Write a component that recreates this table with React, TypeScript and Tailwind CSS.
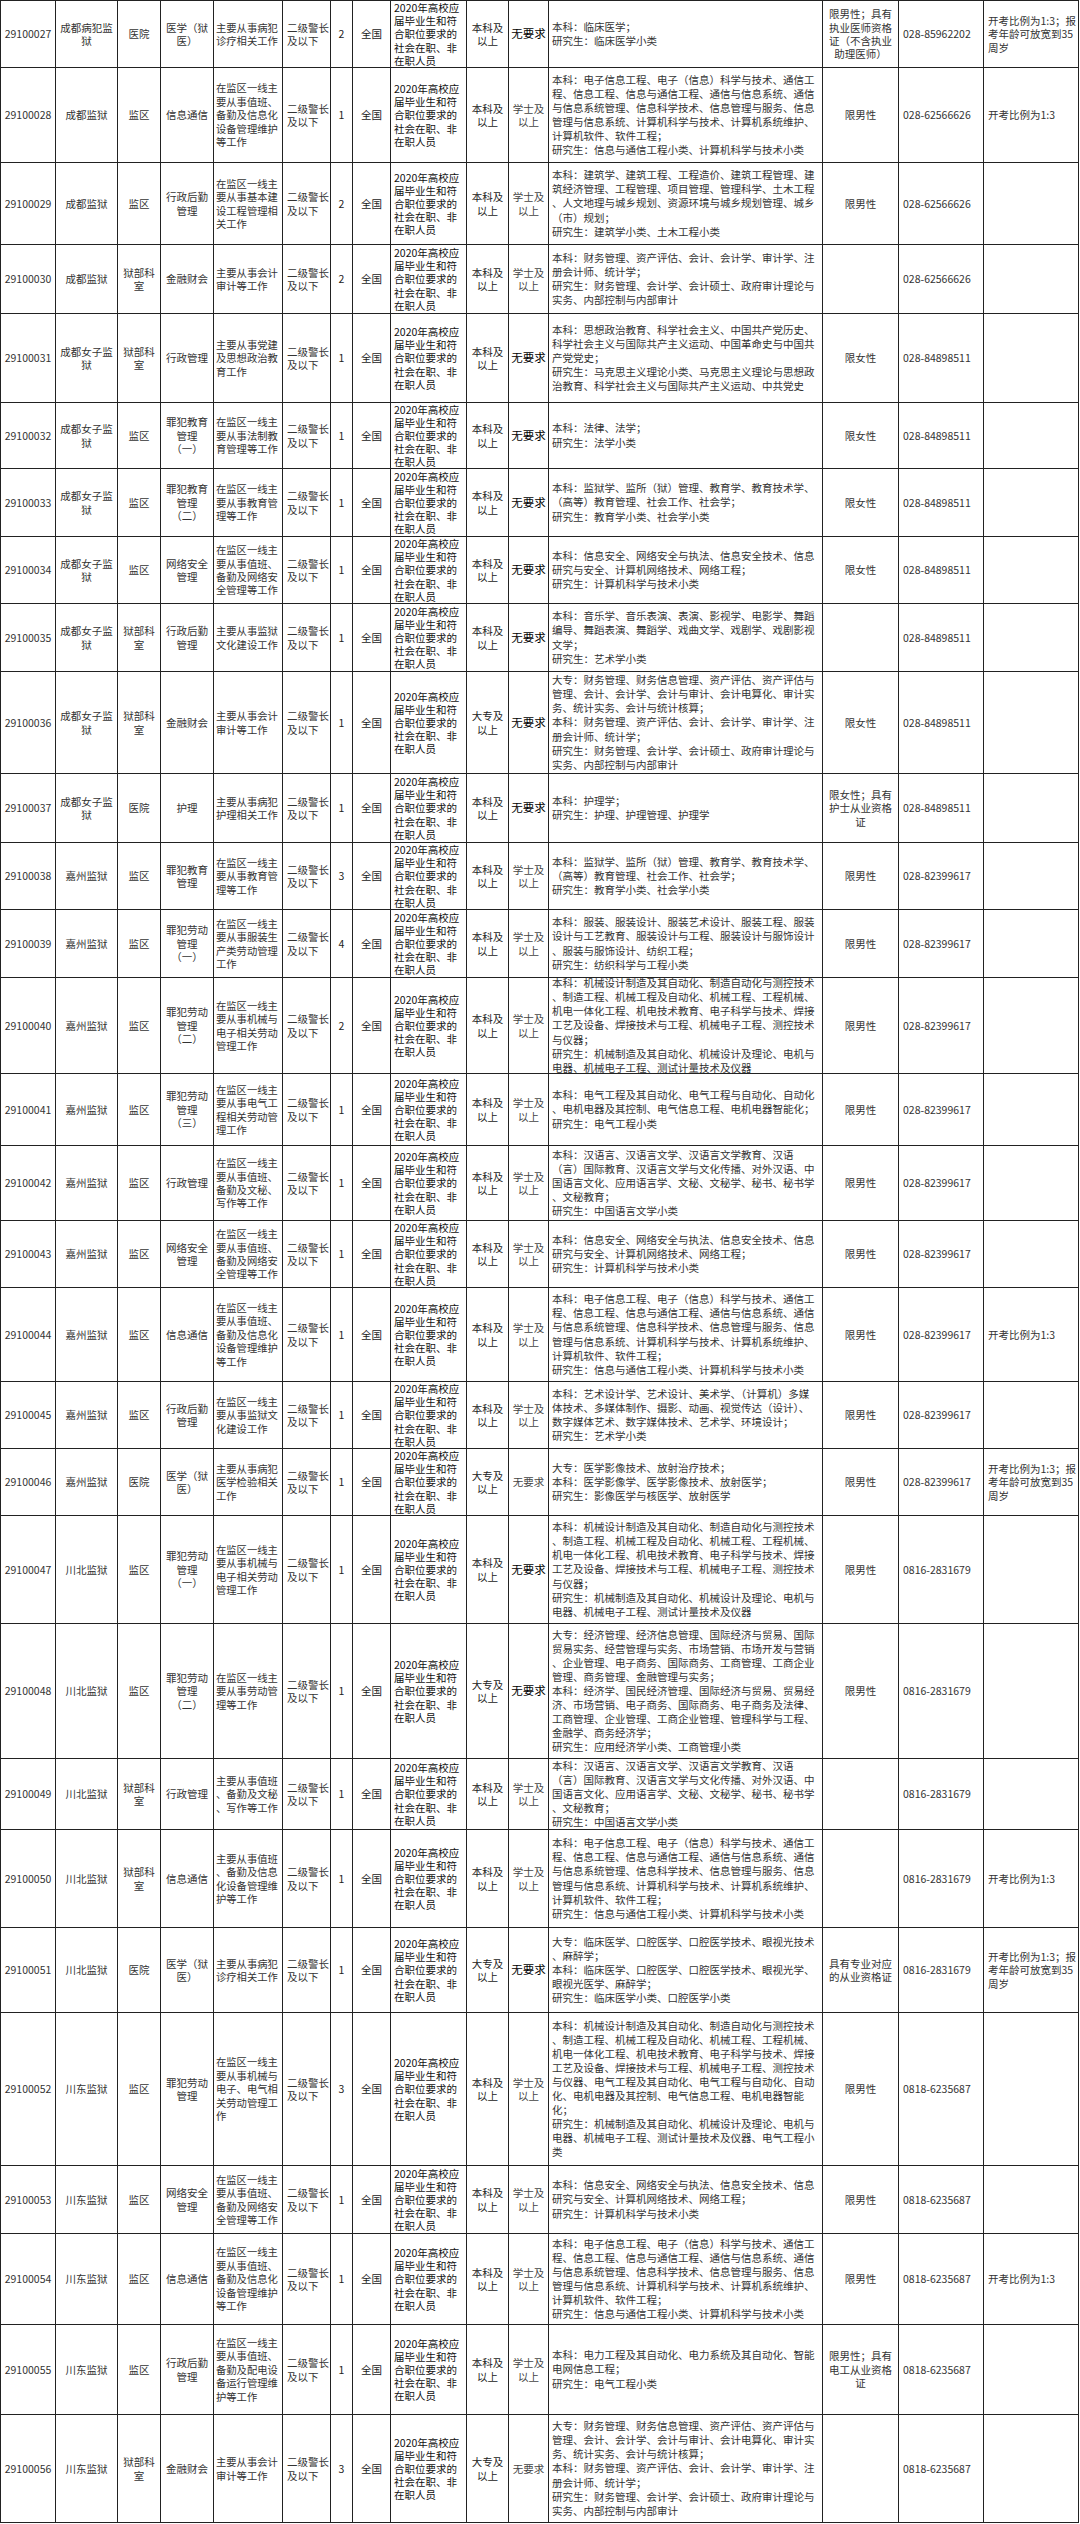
import React from 'react';

const COLS =
  'grid-cols-[55px_62px_43px_53px_69px_48px_22px_38px_76px_42px_40px_274px_76px_85px_95px]';
const CELL = 'flex flex-col justify-center overflow-hidden border-r border-[#222]';

const chunk = (s: string, n: number) => {
  const chars = Array.from(s);
  const out: string[] = [];
  for (let i = 0; i < chars.length; i += n) out.push(chars.slice(i, i + n).join(''));
  return out;
};

const SRC = ['2020年高校应', '届毕业生和符', '合职位要求的', '社会在职、非', '在职人员'];

const N13 = ['开考比例为1:3'];
const N35 = ['开考比例为1:3；报', '考年龄可放宽到35', '周岁'];

const INFO_DESC = '在监区一线主要从事值班、备勤及信息化设备管理维护等工作';
const NET_DESC = '在监区一线主要从事值班、备勤及网络安全管理等工作';
const MED = ['医学（狱', '医）'];

const M_INFO = [
  '本科：电子信息工程、电子（信息）科学与技术、通信工',
  '程、信息工程、信息与通信工程、通信与信息系统、通信',
  '与信息系统管理、信息科学技术、信息管理与服务、信息',
  '管理与信息系统、计算机科学与技术、计算机系统维护、',
  '计算机软件、软件工程；',
  '研究生：信息与通信工程小类、计算机科学与技术小类',
];
const M_BUILD = [
  '本科：建筑学、建筑工程、工程造价、建筑工程管理、建',
  '筑经济管理、工程管理、项目管理、管理科学、土木工程',
  '、人文地理与城乡规划、资源环境与城乡规划管理、城乡',
  '（市）规划；',
  '研究生：建筑学小类、土木工程小类',
];
const M_ACC_B = [
  '本科：财务管理、资产评估、会计、会计学、审计学、注',
  '册会计师、统计学；',
  '研究生：财务管理、会计学、会计硕士、政府审计理论与',
  '实务、内部控制与内部审计',
];
const M_ACC_D = [
  '大专：财务管理、财务信息管理、资产评估、资产评估与',
  '管理、会计、会计学、会计与审计、会计电算化、审计实',
  '务、统计实务、会计与统计核算；',
  ...M_ACC_B,
];
const M_POL = [
  '本科：思想政治教育、科学社会主义、中国共产党历史、',
  '科学社会主义与国际共产主义运动、中国革命史与中国共',
  '产党党史；',
  '研究生：马克思主义理论小类、马克思主义理论与思想政',
  '治教育、科学社会主义与国际共产主义运动、中共党史',
];
const M_EDU = [
  '本科：监狱学、监所（狱）管理、教育学、教育技术学、',
  '（高等）教育管理、社会工作、社会学；',
  '研究生：教育学小类、社会学小类',
];
const M_NET = [
  '本科：信息安全、网络安全与执法、信息安全技术、信息',
  '研究与安全、计算机网络技术、网络工程；',
  '研究生：计算机科学与技术小类',
];
const M_ART1 = [
  '本科：音乐学、音乐表演、表演、影视学、电影学、舞蹈',
  '编导、舞蹈表演、舞蹈学、戏曲文学、戏剧学、戏剧影视',
  '文学；',
  '研究生：艺术学小类',
];
const M_CLOTH = [
  '本科：服装、服装设计、服装艺术设计、服装工程、服装',
  '设计与工艺教育、服装设计与工程、服装设计与服饰设计',
  '、服装与服饰设计、纺织工程；',
  '研究生：纺织科学与工程小类',
];
const MECH_HEAD = [
  '本科：机械设计制造及其自动化、制造自动化与测控技术',
  '、制造工程、机械工程及自动化、机械工程、工程机械、',
  '机电一体化工程、机电技术教育、电子科学与技术、焊接',
  '工艺及设备、焊接技术与工程、机械电子工程、测控技术',
];
const M_MECH = [
  ...MECH_HEAD,
  '与仪器；',
  '研究生：机械制造及其自动化、机械设计及理论、电机与',
  '电器、机械电子工程、测试计量技术及仪器',
];
const M_MECH2 = [
  ...MECH_HEAD,
  '与仪器、电气工程及其自动化、电气工程与自动化、自动',
  '化、电机电器及其控制、电气信息工程、电机电器智能',
  '化；',
  '研究生：机械制造及其自动化、机械设计及理论、电机与',
  '电器、机械电子工程、测试计量技术及仪器、电气工程小',
  '类',
];
const M_ELEC = [
  '本科：电气工程及其自动化、电气工程与自动化、自动化',
  '、电机电器及其控制、电气信息工程、电机电器智能化；',
  '研究生：电气工程小类',
];
const M_CHN = [
  '本科：汉语言、汉语言文学、汉语言文学教育、汉语',
  '（言）国际教育、汉语言文学与文化传播、对外汉语、中',
  '国语言文化、应用语言学、文秘、文秘学、秘书、秘书学',
  '、文秘教育；',
  '研究生：中国语言文学小类',
];
const M_ART2 = [
  '本科：艺术设计学、艺术设计、美术学、（计算机）多媒',
  '体技术、多媒体制作、摄影、动画、视觉传达（设计）、',
  '数字媒体艺术、数字媒体技术、艺术学、环境设计；',
  '研究生：艺术学小类',
];
const M_IMG = [
  '大专：医学影像技术、放射治疗技术；',
  '本科：医学影像学、医学影像技术、放射医学；',
  '研究生：影像医学与核医学、放射医学',
];
const M_ECON = [
  '大专：经济管理、经济信息管理、国际经济与贸易、国际',
  '贸易实务、经营管理与实务、市场营销、市场开发与营销',
  '、企业管理、电子商务、国际商务、工商管理、工商企业',
  '管理、商务管理、金融管理与实务；',
  '本科：经济学、国民经济管理、国际经济与贸易、贸易经',
  '济、市场营销、电子商务、国际商务、电子商务及法律、',
  '工商管理、企业管理、工商企业管理、管理科学与工程、',
  '金融学、商务经济学；',
  '研究生：应用经济学小类、工商管理小类',
];
const M_MED2 = [
  '大专：临床医学、口腔医学、口腔医学技术、眼视光技术',
  '、麻醉学；',
  '本科：临床医学、口腔医学、口腔医学技术、眼视光学、',
  '眼视光医学、麻醉学；',
  '研究生：临床医学小类、口腔医学小类',
];
const M_POWER = [
  '本科：电力工程及其自动化、电力系统及其自动化、智能',
  '电网信息工程；',
  '研究生：电气工程小类',
];

type Row = {
  code: string;
  unit: string;
  dept: string;
  pos: string[];
  desc: string;
  count: string;
  edu: string;
  deg: 'bs' | 'none' | 'gray';
  majors: string[];
  other: string;
  phone: string;
  note?: string[];
  h: string;
};

const rows: Row[] = [
  { code: '29100027', unit: '成都病犯监狱', dept: '医院', pos: MED, desc: '主要从事病犯诊疗相关工作', count: '2', edu: '本科', deg: 'none', majors: ['本科：临床医学；', '研究生：临床医学小类'], other: '限男性；具有执业医师资格证（不含执业助理医师）', phone: '028-85962202', note: N35, h: 'h-[67px]' },
  { code: '29100028', unit: '成都监狱', dept: '监区', pos: ['信息通信'], desc: INFO_DESC, count: '1', edu: '本科', deg: 'bs', majors: M_INFO, other: '限男性', phone: '028-62566626', note: N13, h: 'h-[95px]' },
  { code: '29100029', unit: '成都监狱', dept: '监区', pos: ['行政后勤', '管理'], desc: '在监区一线主要从事基本建设工程管理相关工作', count: '2', edu: '本科', deg: 'bs', majors: M_BUILD, other: '限男性', phone: '028-62566626', h: 'h-[82px]' },
  { code: '29100030', unit: '成都监狱', dept: '狱部科室', pos: ['金融财会'], desc: '主要从事会计审计等工作', count: '2', edu: '本科', deg: 'bs', majors: M_ACC_B, other: '', phone: '028-62566626', h: 'h-[69px]' },
  { code: '29100031', unit: '成都女子监狱', dept: '狱部科室', pos: ['行政管理'], desc: '主要从事党建及思想政治教育工作', count: '1', edu: '本科', deg: 'none', majors: M_POL, other: '限女性', phone: '028-84898511', h: 'h-[89px]' },
  { code: '29100032', unit: '成都女子监狱', dept: '监区', pos: ['罪犯教育', '管理', '（一）'], desc: '在监区一线主要从事法制教育管理等工作', count: '1', edu: '本科', deg: 'none', majors: ['本科：法律、法学；', '研究生：法学小类'], other: '限女性', phone: '028-84898511', h: 'h-[66px]' },
  { code: '29100033', unit: '成都女子监狱', dept: '监区', pos: ['罪犯教育', '管理', '（二）'], desc: '在监区一线主要从事教育管理等工作', count: '1', edu: '本科', deg: 'none', majors: M_EDU, other: '限女性', phone: '028-84898511', h: 'h-[68px]' },
  { code: '29100034', unit: '成都女子监狱', dept: '监区', pos: ['网络安全', '管理'], desc: NET_DESC, count: '1', edu: '本科', deg: 'none', majors: M_NET, other: '限女性', phone: '028-84898511', h: 'h-[67px]' },
  { code: '29100035', unit: '成都女子监狱', dept: '狱部科室', pos: ['行政后勤', '管理'], desc: '主要从事监狱文化建设工作', count: '1', edu: '本科', deg: 'none', majors: M_ART1, other: '', phone: '028-84898511', h: 'h-[68px]' },
  { code: '29100036', unit: '成都女子监狱', dept: '狱部科室', pos: ['金融财会'], desc: '主要从事会计审计等工作', count: '1', edu: '大专', deg: 'none', majors: M_ACC_D, other: '限女性', phone: '028-84898511', h: 'h-[102px]' },
  { code: '29100037', unit: '成都女子监狱', dept: '医院', pos: ['护理'], desc: '主要从事病犯护理相关工作', count: '1', edu: '本科', deg: 'none', majors: ['本科：护理学；', '研究生：护理、护理管理、护理学'], other: '限女性；具有护士从业资格证', phone: '028-84898511', h: 'h-[69px]' },
  { code: '29100038', unit: '嘉州监狱', dept: '监区', pos: ['罪犯教育', '管理'], desc: '在监区一线主要从事教育管理等工作', count: '3', edu: '本科', deg: 'bs', majors: M_EDU, other: '限男性', phone: '028-82399617', h: 'h-[67px]' },
  { code: '29100039', unit: '嘉州监狱', dept: '监区', pos: ['罪犯劳动', '管理', '（一）'], desc: '在监区一线主要从事服装生产类劳动管理工作', count: '4', edu: '本科', deg: 'bs', majors: M_CLOTH, other: '限男性', phone: '028-82399617', h: 'h-[68px]' },
  { code: '29100040', unit: '嘉州监狱', dept: '监区', pos: ['罪犯劳动', '管理', '（二）'], desc: '在监区一线主要从事机械与电子相关劳动管理工作', count: '2', edu: '本科', deg: 'bs', majors: M_MECH, other: '限男性', phone: '028-82399617', h: 'h-[96px]' },
  { code: '29100041', unit: '嘉州监狱', dept: '监区', pos: ['罪犯劳动', '管理', '（三）'], desc: '在监区一线主要从事电气工程相关劳动管理工作', count: '1', edu: '本科', deg: 'bs', majors: M_ELEC, other: '限男性', phone: '028-82399617', h: 'h-[72px]' },
  { code: '29100042', unit: '嘉州监狱', dept: '监区', pos: ['行政管理'], desc: '在监区一线主要从事值班、备勤及文秘、写作等工作', count: '1', edu: '本科', deg: 'bs', majors: M_CHN, other: '限男性', phone: '028-82399617', h: 'h-[75px]' },
  { code: '29100043', unit: '嘉州监狱', dept: '监区', pos: ['网络安全', '管理'], desc: NET_DESC, count: '1', edu: '本科', deg: 'bs', majors: M_NET, other: '限男性', phone: '028-82399617', h: 'h-[67px]' },
  { code: '29100044', unit: '嘉州监狱', dept: '监区', pos: ['信息通信'], desc: INFO_DESC, count: '1', edu: '本科', deg: 'bs', majors: M_INFO, other: '限男性', phone: '028-82399617', note: N13, h: 'h-[94px]' },
  { code: '29100045', unit: '嘉州监狱', dept: '监区', pos: ['行政后勤', '管理'], desc: '在监区一线主要从事监狱文化建设工作', count: '1', edu: '本科', deg: 'bs', majors: M_ART2, other: '限男性', phone: '028-82399617', h: 'h-[67px]' },
  { code: '29100046', unit: '嘉州监狱', dept: '医院', pos: MED, desc: '主要从事病犯医学检验相关工作', count: '1', edu: '大专', deg: 'gray', majors: M_IMG, other: '限男性', phone: '028-82399617', note: N35, h: 'h-[67px]' },
  { code: '29100047', unit: '川北监狱', dept: '监区', pos: ['罪犯劳动', '管理', '（一）'], desc: '在监区一线主要从事机械与电子相关劳动管理工作', count: '1', edu: '本科', deg: 'none', majors: M_MECH, other: '限男性', phone: '0816-2831679', h: 'h-[108px]' },
  { code: '29100048', unit: '川北监狱', dept: '监区', pos: ['罪犯劳动', '管理', '（二）'], desc: '在监区一线主要从事劳动管理等工作', count: '1', edu: '大专', deg: 'none', majors: M_ECON, other: '限男性', phone: '0816-2831679', h: 'h-[135px]' },
  { code: '29100049', unit: '川北监狱', dept: '狱部科室', pos: ['行政管理'], desc: '主要从事值班、备勤及文秘、写作等工作', count: '1', edu: '本科', deg: 'bs', majors: M_CHN, other: '', phone: '0816-2831679', h: 'h-[71px]' },
  { code: '29100050', unit: '川北监狱', dept: '狱部科室', pos: ['信息通信'], desc: '主要从事值班、备勤及信息化设备管理维护等工作', count: '1', edu: '本科', deg: 'bs', majors: M_INFO, other: '', phone: '0816-2831679', note: N13, h: 'h-[98px]' },
  { code: '29100051', unit: '川北监狱', dept: '医院', pos: MED, desc: '主要从事病犯诊疗相关工作', count: '1', edu: '大专', deg: 'none', majors: M_MED2, other: '具有专业对应的从业资格证', phone: '0816-2831679', note: N35, h: 'h-[85px]' },
  { code: '29100052', unit: '川东监狱', dept: '监区', pos: ['罪犯劳动', '管理'], desc: '在监区一线主要从事机械与电子、电气相关劳动管理工作', count: '3', edu: '本科', deg: 'bs', majors: M_MECH2, other: '限男性', phone: '0818-6235687', h: 'h-[153px]' },
  { code: '29100053', unit: '川东监狱', dept: '监区', pos: ['网络安全', '管理'], desc: NET_DESC, count: '1', edu: '本科', deg: 'bs', majors: M_NET, other: '限男性', phone: '0818-6235687', h: 'h-[68px]' },
  { code: '29100054', unit: '川东监狱', dept: '监区', pos: ['信息通信'], desc: INFO_DESC, count: '1', edu: '本科', deg: 'bs', majors: M_INFO, other: '限男性', phone: '0818-6235687', note: N13, h: 'h-[91px]' },
  { code: '29100055', unit: '川东监狱', dept: '监区', pos: ['行政后勤', '管理'], desc: '在监区一线主要从事值班、备勤及配电设备运行管理维护等工作', count: '1', edu: '本科', deg: 'bs', majors: M_POWER, other: '限男性；具有电工从业资格证', phone: '0818-6235687', h: 'h-[90px]' },
  { code: '29100056', unit: '川东监狱', dept: '狱部科室', pos: ['金融财会'], desc: '主要从事会计审计等工作', count: '3', edu: '大专', deg: 'gray', majors: M_ACC_D, other: '', phone: '0818-6235687', h: 'h-[108px]' },
];

function Lines({ lines }: { lines: string[] }) {
  return (
    <>
      {lines.map((l, i) => (
        <span key={i} className="block whitespace-nowrap">
          {l}
        </span>
      ))}
    </>
  );
}

function TableRow({ r }: { r: Row }) {
  return (
    <div className={`grid ${COLS} border-b border-[#222] ${r.h}`}>
      <div className={`${CELL} items-center text-[#333]`}>{r.code}</div>
      <div className={`${CELL} items-center text-center leading-[13.4px] text-[#333]`}>
        <Lines lines={chunk(r.unit, 5)} />
      </div>
      <div className={`${CELL} items-center text-center leading-[13.4px] text-[#333]`}>
        <Lines lines={chunk(r.dept, 3)} />
      </div>
      <div className={`${CELL} items-center text-center leading-[13.4px] text-[#333]`}>
        <Lines lines={r.pos} />
      </div>
      <div className={`${CELL} items-start pl-[2px] text-[10.3px] leading-[13.4px] text-[#333]`}>
        <Lines lines={chunk(r.desc, 6)} />
      </div>
      <div className={`${CELL} items-start pl-[4px] leading-[13.4px] text-[#333]`}>
        <Lines lines={['二级警长', '及以下']} />
      </div>
      <div className={`${CELL} items-center text-[#222]`}>{r.count}</div>
      <div className={`${CELL} items-center text-[#222]`}>全国</div>
      <div className={`${CELL} items-start pl-[3px] leading-[13.1px] text-[#111]`}>
        <Lines lines={SRC} />
      </div>
      <div className={`${CELL} items-center text-center leading-[13.4px] text-[#222]`}>
        <Lines lines={[`${r.edu}及`, '以上']} />
      </div>
      {r.deg === 'bs' ? (
        <div className={`${CELL} items-center text-center leading-[13.4px] text-[#444]`}>
          <Lines lines={['学士及', '以上']} />
        </div>
      ) : r.deg === 'gray' ? (
        <div className={`${CELL} items-center text-[#444]`}>无要求</div>
      ) : (
        <div className={`${CELL} items-center text-[11.5px] text-black`}>无要求</div>
      )}
      <div className={`${CELL} items-start pl-[3px] leading-[14.1px] text-[#333]`}>
        <Lines lines={r.majors} />
      </div>
      <div className={`${CELL} items-center text-center leading-[13.4px] text-[#333]`}>
        <Lines lines={chunk(r.other, 6)} />
      </div>
      <div className={`${CELL} items-start pl-[4px] text-[#333]`}>{r.phone}</div>
      <div className={`${CELL} items-start pl-[4px] leading-[13.4px] text-[#333]`}>
        {r.note && <Lines lines={r.note} />}
      </div>
    </div>
  );
}

export default function App() {
  return (
    <div className="min-h-screen bg-white font-['Noto_Sans_CJK_SC',sans-serif] text-[10.5px]">
      <div className="w-[1079px] border-t border-l border-[#222]">
        {rows.map((r) => (
          <TableRow key={r.code} r={r} />
        ))}
      </div>
    </div>
  );
}
